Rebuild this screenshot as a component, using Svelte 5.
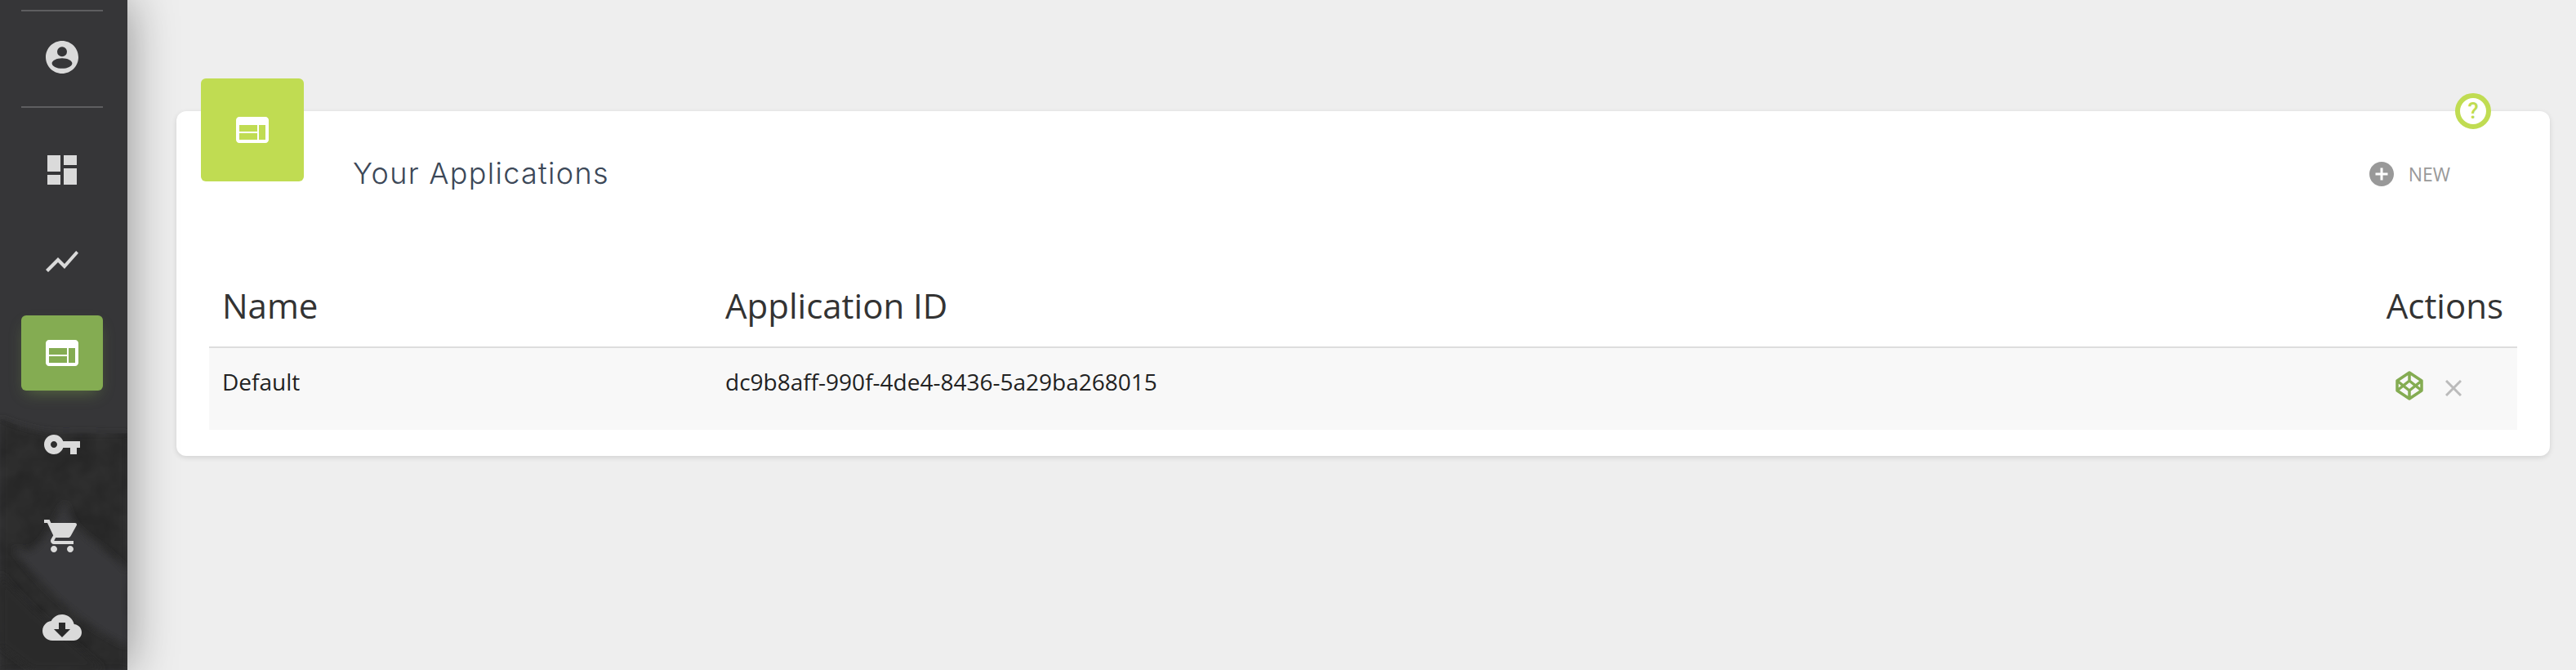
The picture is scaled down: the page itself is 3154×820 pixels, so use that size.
<script>
	const sideItems = [
		{ name: 'dashboard', path: 'M3 13h8V3H3v10zm0 8h8v-6H3v6zm10 0h8V11h-8v10zm0-18v6h8V3h-8z' },
		{ name: 'stats', path: 'M3.5 18.49l6-6.01 4 4L22 6.92l-1.41-1.41-7.09 7.97-4-4L2 16.99z' },
		{ name: 'apps', active: true, path: 'M20 4H4c-1.1 0-1.99.9-1.99 2L2 18c0 1.1.9 2 2 2h16c1.1 0 2-.9 2-2V6c0-1.1-.9-2-2-2zm-5 14H4v-4h11v4zm0-5H4V9h11v4zm5 5h-4V9h4v9z' },
		{ name: 'keys', path: 'M12.65 10C11.83 7.67 9.61 6 7 6c-3.31 0-6 2.69-6 6s2.69 6 6 6c2.61 0 4.83-1.67 5.65-4H17v4h4v-4h2v-4H12.65zM7 14c-1.1 0-2-.9-2-2s.9-2 2-2 2 .9 2 2-.9 2-2 2z' },
		{ name: 'cart', path: 'M7 18c-1.1 0-1.99.9-1.99 2S5.9 22 7 22s2-.9 2-2-.9-2-2-2zM1 2v2h2l3.6 7.59-1.35 2.45c-.16.28-.25.61-.25.96 0 1.1.9 2 2 2h12v-2H7.42c-.14 0-.25-.11-.25-.25l.03-.12.9-1.63h7.45c.75 0 1.41-.41 1.75-1.03l3.58-6.49c.08-.14.12-.31.12-.48 0-.55-.45-1-1-1H5.21l-.94-2H1zm16 16c-1.1 0-1.99.9-1.99 2s.89 2 1.99 2 2-.9 2-2-.9-2-2-2z' },
		{ name: 'download', path: 'M19.35 10.04C18.67 6.59 15.64 4 12 4 9.11 4 6.6 5.64 5.35 8.04 2.34 8.36 0 10.91 0 14c0 3.31 2.69 6 6 6h13c2.76 0 5-2.24 5-5 0-2.64-2.05-4.78-4.65-4.96zM17 13l-5 5-5-5h3V9h4v4h3z' }
	];

	const webIcon = sideItems[2].path;

	const applications = [{ name: 'Default', id: 'dc9b8aff-990f-4de4-8436-5a29ba268015' }];
</script>

<div class="page">
	<!-- Sidebar -->
	<aside class="sidebar">
		<svg class="mountain" viewBox="0 0 156 820" preserveAspectRatio="none" aria-hidden="true">
			<defs>
				<filter id="soft"><feGaussianBlur stdDeviation="5" /></filter>
				<filter id="grain" x="0" y="0" width="100%" height="100%">
					<feTurbulence type="fractalNoise" baseFrequency="0.035" numOctaves="3" seed="4" />
					<feColorMatrix values="0 0 0 0 0  0 0 0 0 0  0 0 0 0 0  0 0 0 .35 -.1" />
					<feGaussianBlur stdDeviation="1" />
				</filter>
				<clipPath id="ridge">
					<path d="M0 512 C30 525 60 532 90 530 C115 529 135 532 156 530 V820 H0 Z" />
				</clipPath>
			</defs>
			<path d="M0 512 C30 525 60 532 90 530 C115 529 135 532 156 530 V820 H0 Z" fill="#2d2d2f" filter="url(#soft)" />
			<rect y="500" width="156" height="320" clip-path="url(#ridge)" filter="url(#grain)" />
			<path d="M15 670 C50 690 62 640 80 615 C90 660 115 655 156 700 V790 C110 770 60 730 15 670 Z" fill="#39393b" filter="url(#soft)" />
			<path d="M0 700 C30 740 70 770 105 800 L128 820 H40 L0 790 Z" fill="#29292b" filter="url(#soft)" />
		</svg>

		<nav class="side-nav">
			<div class="side-rule"></div>
			<div class="avatar">
				<svg class="side-icon" viewBox="0 0 24 24">
					<path d="M12 2C6.48 2 2 6.48 2 12s4.48 10 10 10 10-4.48 10-10S17.52 2 12 2zm0 3.600a3 3 0 1 1 0 6 3 3 0 0 1 0-6zM12 12.600c3.400 0 6.200 1.500 6.200 3.100 0 1.800-2.800 3.200-6.200 3.200s-6.200-1.400-6.200-3.200c0-1.600 2.800-3.100 6.200-3.100z" fill-rule="evenodd" />
				</svg>
			</div>
			<div class="side-rule"></div>

			<ul>
				{#each sideItems as item}
					<li class:active={item.active}>
						<svg class="side-icon" viewBox="0 0 24 24"><path d={item.path} /></svg>
					</li>
				{/each}
			</ul>
		</nav>
	</aside>

	<!-- Content -->
	<main class="content">
		<section class="card">
			<div class="tile">
				<svg viewBox="0 0 24 24"><path d={webIcon} /></svg>
			</div>
			<div class="help">?</div>

			<header class="card-header">
				<h2>Your Applications</h2>
				<button class="new-btn">
					<svg viewBox="0 0 24 24">
						<path d="M12 2C6.48 2 2 6.48 2 12s4.48 10 10 10 10-4.48 10-10S17.52 2 12 2zm5 11h-4v4h-2v-4H7v-2h4V7h2v4h4v2z" />
					</svg>
					<span>NEW</span>
				</button>
			</header>

			<table>
				<thead>
					<tr>
						<th class="col-name">Name</th>
						<th>Application ID</th>
						<th class="col-actions">Actions</th>
					</tr>
				</thead>
				<tbody>
					{#each applications as app}
						<tr>
							<td>{app.name}</td>
							<td>{app.id}</td>
							<td class="col-actions">
								<div class="actions">
									<svg class="codepen" viewBox="0 0 36 36">
										<path d="M18 2 L33 12 V24 L18 34 L3 24 V12 Z M18 2 V12 M18 24 V34 M3 12 L18 24 L33 12 M3 24 L18 12 L33 24" />
									</svg>
									<svg class="close" viewBox="0 0 20 20">
										<path d="M1 1 L19 19 M19 1 L1 19" />
									</svg>
								</div>
							</td>
						</tr>
					{/each}
				</tbody>
			</table>
		</section>
	</main>
</div>

<style>
	:global(body) {
		margin: 0;
		background: #eeeeee;
	}

	.page {
		display: flex;
		width: 3154px;
		height: 820px;
		overflow: hidden;
		background: #eeeeee;
		font-family: 'Open Sans', sans-serif;
	}

	/* Sidebar */
	.sidebar {
		position: relative;
		flex: 0 0 156px;
		box-sizing: border-box;
		padding-right: 4px;
		background: #363638;
		box-shadow: 0 0 60px rgba(0, 0, 0, 0.42);
		z-index: 2;
	}

	.mountain {
		position: absolute;
		inset: 0;
		width: 100%;
		height: 100%;
	}

	.side-nav {
		position: relative;
		display: flex;
		flex-direction: column;
		align-items: center;
		padding-top: 12px;
	}

	.side-rule {
		width: 100px;
		height: 2px;
		background: #5e5e60;
	}

	.avatar {
		display: flex;
		align-items: center;
		justify-content: center;
		height: 116px;
		padding-bottom: 4px;
		box-sizing: border-box;
	}

	.side-nav ul {
		display: flex;
		flex-direction: column;
		gap: 20px;
		margin: 30px 0 0;
		padding: 0;
		list-style: none;
	}

	.side-nav li {
		display: flex;
		align-items: center;
		justify-content: center;
		width: 100px;
		height: 92px;
		border-radius: 6px;
	}

	.side-nav li.active {
		background: #84ac52;
		box-shadow: 0 8px 18px -6px rgba(132, 172, 82, 0.45);
	}

	.side-nav li.active .side-icon {
		fill: #ffffff;
	}

	.side-icon {
		width: 48px;
		height: 48px;
		fill: #dadada;
	}

	/* Card */
	.content {
		flex: 1;
		padding: 136px 32px 0 60px;
	}

	.card {
		position: relative;
		height: 422px;
		box-sizing: border-box;
		padding: 0 40px 30px;
		background: #ffffff;
		border-radius: 12px;
		box-shadow: 0 2px 6px rgba(0, 0, 0, 0.12);
	}

	.tile {
		position: absolute;
		top: -40px;
		left: 30px;
		display: flex;
		align-items: center;
		justify-content: center;
		width: 126px;
		height: 126px;
		border-radius: 6px;
		background: #c0dc52;
	}

	.tile svg {
		width: 48px;
		height: 48px;
		fill: #ffffff;
	}

	.help {
		position: absolute;
		top: -22px;
		right: 72px;
		width: 32px;
		height: 32px;
		border: 6px solid #c0dc52;
		border-radius: 50%;
		background: #ffffff;
		color: #c0dc52;
		font: 500 27px/32px Roboto, sans-serif;
		text-align: center;
	}

	.card-header {
		display: flex;
		align-items: center;
		justify-content: space-between;
		height: 154px;
		padding: 0 82px 0 176px;
	}

	h2 {
		margin: 0;
		color: #3c4858;
		font: 300 36px/1.2 Inter, sans-serif;
		letter-spacing: 1.3px;
	}

	.new-btn {
		display: flex;
		align-items: center;
		gap: 15px;
		padding: 0;
		border: 0;
		background: none;
		color: #999999;
		font: 400 23px 'Open Sans', sans-serif;
	}

	.new-btn svg {
		width: 36px;
		height: 36px;
		fill: #999999;
	}

	/* Table */
	table {
		width: 100%;
		border-collapse: collapse;
		table-layout: fixed;
		color: #333333;
	}

	th {
		height: 135px;
		padding: 32px 17px 0 14px;
		box-sizing: border-box;
		border-bottom: 2px solid #dddddd;
		font-size: 42px;
		font-weight: 400;
		text-align: left;
	}

	.col-name {
		width: 618px;
		padding-left: 16px;
	}

	th.col-actions {
		width: 260px;
		text-align: right;
	}

	td {
		height: 101px;
		box-sizing: border-box;
		padding: 22px 14px 0;
		background: #f8f8f8;
		color: #222222;
		font-size: 28px;
		vertical-align: top;
	}

	td:first-child {
		padding-left: 16px;
	}

	.actions {
		display: flex;
		align-items: center;
		justify-content: flex-end;
		gap: 26px;
		padding: 6px 54px 0 0;
	}

	.codepen {
		width: 36px;
		height: 36px;
		fill: none;
		stroke: #84ac52;
		stroke-width: 3.5;
		stroke-linejoin: round;
	}

	.close {
		width: 20px;
		height: 20px;
		margin-top: 6px;
		fill: none;
		stroke: #bbbbbb;
		stroke-width: 3;
	}
</style>
